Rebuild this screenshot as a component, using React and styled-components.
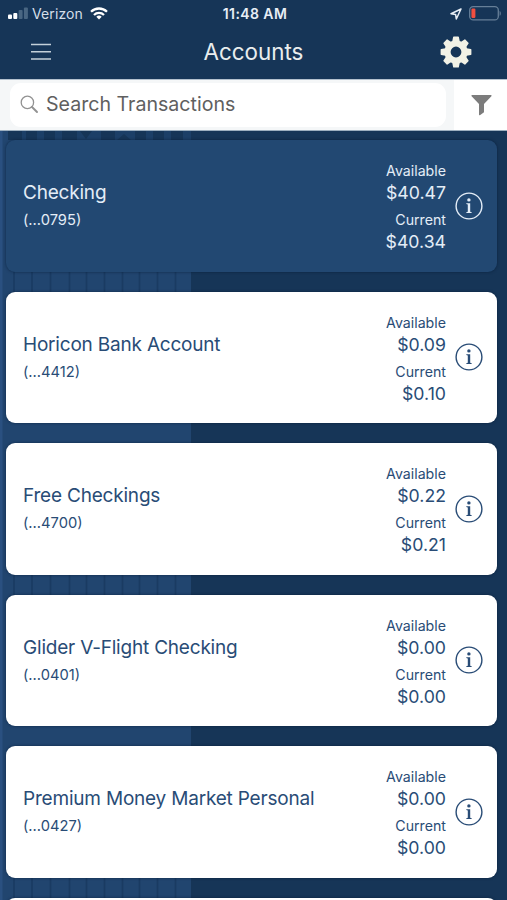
import React from "react";
import styled, { createGlobalStyle, css } from "styled-components";

const accounts = [
  { name: "Checking", number: "0795", available: "$40.47", current: "$40.34", selected: true },
  { name: "Horicon Bank Account", number: "4412", available: "$0.09", current: "$0.10" },
  { name: "Free Checkings", number: "4700", available: "$0.22", current: "$0.21" },
  { name: "Glider V-Flight Checking", number: "0401", available: "$0.00", current: "$0.00" },
  { name: "Premium Money Market Personal", number: "0427", available: "$0.00", current: "$0.00" },
];

const GlobalStyle = createGlobalStyle`
  * {
    box-sizing: border-box;
  }

  body {
    margin: 0;
    background: #163557;
    font-family: Inter, "Liberation Sans", sans-serif;
  }
`;

const Screen = styled.div`
  display: flex;
  flex-direction: column;
  height: 900px;
  overflow: hidden;
  background: #163557;
`;

const StatusBar = styled.div`
  flex: none;
  display: grid;
  grid-template-columns: 1fr auto 1fr;
  align-items: center;
  height: 27px;
  padding: 0 5px 0 8px;
  color: #e8eef5;
  font-size: 14px;
`;

const StatusGroup = styled.div`
  display: flex;
  align-items: center;
  justify-content: ${(props) => (props.$end ? "flex-end" : "flex-start")};

  & svg {
    flex: none;
    display: block;
  }
`;

const Carrier = styled.span`
  margin: 0 7px 0 4px;
  letter-spacing: 0.1px;
  color: #d5dfe9;
`;

const Clock = styled.span`
  font-weight: 600;
  font-size: 14px;
  letter-spacing: 0.4px;
`;

const NavBar = styled.header`
  flex: none;
  display: grid;
  grid-template-columns: 82px 1fr 103px;
  align-items: center;
  height: 52px;
  padding-bottom: 3px;
`;

const Title = styled.h1`
  margin: 0;
  padding: 0 0 1px 21px;
  text-align: center;
  font-size: 22.4px;
  font-weight: 400;
  color: #e9edee;
`;

const IconButton = styled.button`
  display: flex;
  align-items: center;
  justify-content: center;
  padding: 0;
  border: 0;
  background: none;
`;

const SearchBar = styled.div`
  flex: none;
  display: flex;
  height: 52px;
  border-top: 1px solid #b4c1ce;
  border-bottom: 1px solid #9dafbf;
  background: #fff;
`;

const SearchWrap = styled.div`
  width: 454px;
  padding: 3px 8px 3px 10px;
  background: #f5f7f8;
`;

const SearchField = styled.div`
  display: flex;
  align-items: center;
  height: 44px;
  padding: 0 0 2px 10px;
  border-radius: 11px;
  background: #fff;
  color: #606060;
  font-size: 19.6px;

  & span {
    margin-left: 7px;
  }
`;

const FilterButton = styled(IconButton)`
  flex: 1;
  padding-left: 1px;
`;

const List = styled.main`
  flex: 1;
  position: relative;
  overflow: hidden;
`;

const Backdrop = styled.svg`
  position: absolute;
  top: 0;
  left: 0;
`;

const Cards = styled.div`
  position: relative;
  display: flex;
  flex-direction: column;
  gap: 20px;
  padding: 9px 10px 0 6px;
`;

const Card = styled.section`
  flex: none;
  display: flex;
  align-items: center;
  height: 131.5px;
  padding: 0 14px 0 17px;
  border-radius: 9px;
  background: #fff;
  color: #294c76;
  box-shadow: 0 0 3px rgba(5, 25, 50, 0.65);

  ${(props) =>
    props.$selected &&
    css`
      background: #224872;
      color: #e4edf7;
    `}
`;

const AccountInfo = styled.div`
  flex: 1;
  padding-top: 2px;
`;

const AccountName = styled.div`
  line-height: 28px;
  font-size: 19px;
  letter-spacing: -0.2px;
`;

const AccountNumber = styled.div`
  line-height: 27px;
  font-size: 14.7px;
`;

const Balances = styled.div`
  padding-top: 2px;
  margin-right: 9px;
  text-align: right;
`;

const Label = styled.div`
  line-height: 22px;
  font-size: 14.2px;
`;

const Amount = styled.div`
  line-height: 22px;
  font-size: 17.7px;
  margin-bottom: ${(props) => (props.$last ? 0 : "5px")};
`;

function SignalIcon() {
  return (
    <svg width="20" height="13" viewBox="0 0 20 13">
      <rect x="0" y="7.5" width="4" height="4.5" rx="1" fill="#fff" />
      <rect x="5.3" y="6" width="4" height="6" rx="1" fill="#fff" />
      <rect x="10.6" y="3" width="4" height="9" rx="1" fill="#496682" />
      <rect x="15.9" y="0.5" width="4" height="11.5" rx="1" fill="#496682" />
    </svg>
  );
}

function WifiIcon() {
  return (
    <svg width="18" height="13" viewBox="0 0 18 13" fill="none" stroke="#fff" strokeWidth="2.3">
      <path d="M1 4.8a11.4 11.4 0 0 1 16 0" />
      <path d="M4 8a7.1 7.1 0 0 1 10 0" />
      <path d="M9 12.5 6.3 9.8a3.9 3.9 0 0 1 5.4 0z" fill="#fff" stroke="none" />
    </svg>
  );
}

function LocationIcon() {
  return (
    <svg width="12" height="12" viewBox="0 0 12 12" fill="none" stroke="#e8eef5" strokeWidth="1.5" strokeLinejoin="round">
      <path d="M11 1 1 5.7l4.6.7.7 4.6z" />
    </svg>
  );
}

function BatteryIcon() {
  return (
    <svg width="33" height="15" viewBox="0 0 33 15">
      <rect x="0.7" y="0.7" width="28.6" height="13.2" rx="3.5" fill="none" stroke="#667f98" strokeWidth="1.3" />
      <rect x="2.4" y="2.6" width="4" height="9.4" rx="1.2" fill="#f04f40" />
      <path d="M30.6 5v4.8c1.6-.5 1.6-4.3 0-4.8z" fill="#667f98" />
    </svg>
  );
}

function MenuIcon() {
  return (
    <svg width="20" height="18" viewBox="0 0 20 18" stroke="#c3d0d9" strokeWidth="1.5">
      <path d="M0 1.5h20M0 8.7h20M0 15.9h20" />
    </svg>
  );
}

function GearIcon() {
  const teeth = [0, 45, 90, 135, 180, 225, 270, 315];
  return (
    <svg width="32" height="32" viewBox="-16 -16 32 32">
      <circle r="8.5" fill="none" stroke="#f2f2e6" strokeWidth="6.2" />
      {teeth.map((angle) => (
        <path
          key={angle}
          d="M-3.8-10.5-2.9-14.9Q-2.8-15.4-2.2-15.4H2.2Q2.8-15.4 2.9-14.9L3.8-10.5z"
          transform={`rotate(${angle})`}
          fill="#f2f2e6"
        />
      ))}
    </svg>
  );
}

function SearchIcon() {
  return (
    <svg width="19" height="19" viewBox="0 0 19 19" fill="none" stroke="#929292" strokeLinecap="round">
      <circle cx="7.4" cy="7.4" r="6.2" strokeWidth="1.3" />
      <path d="m12 12 5 5" strokeWidth="1.9" />
    </svg>
  );
}

function FilterIcon() {
  return (
    <svg width="21" height="22" viewBox="0 0 21 22">
      <path d="M.8 1h19.4q.6.5.2 1.3L13 10v8.2l-4.1 3q-.9.3-.9-.7V10L.6 2.3Q.2 1.5.8 1z" fill="#7c7c7c" />
    </svg>
  );
}

function InfoIcon() {
  return (
    <svg width="28" height="28" viewBox="0 0 28 28" fill="none">
      <circle cx="14" cy="14" r="12.9" stroke="currentColor" strokeWidth="1.4" />
      <circle cx="13.9" cy="7.9" r="1.7" fill="currentColor" />
      <path d="M11.3 11.3h3.9v8.5l1.5.4v.8h-5.4v-.8l1.5-.4v-7.3l-1.5-.4z" fill="currentColor" />
    </svg>
  );
}

// Bank building behind the cards: brick columns between plain bands
function Building() {
  const joints = [14, 32, 50.5, 69.5, 86.5, 104.5, 122.5, 139.5, 157.5, 175.5];
  const windows = [
    [8, 14],
    [26, 11],
    [44, 11],
    [62, 15],
    [101, 14],
    [135, 11],
    [153, 11],
    [171, 12],
  ];
  return (
    <Backdrop width="507" height="769" viewBox="0 0 507 769">
      <rect width="191" height="769" fill="#21456f" />
      <rect width="2.5" height="769" fill="#2a5080" />
      <rect x="8" width="183" height="9" fill="#1c3f67" />
      {windows.map(([x, width]) => (
        <rect key={x} x={x} y="0" width={width} height="9" fill="#163557" />
      ))}
      <path d="M80 0h12l-6 8zM117 9l7-6 7 6z" fill="#163557" />
      {[141, 444, 747].map((y) =>
        joints.map((x) => <rect key={`${x}-${y}`} x={x - 0.8} y={y} width="1.6" height="20" fill="#1a3b62" />)
      )}
    </Backdrop>
  );
}

function AccountCard({ account }) {
  return (
    <Card $selected={account.selected}>
      <AccountInfo>
        <AccountName>{account.name}</AccountName>
        <AccountNumber>(...{account.number})</AccountNumber>
      </AccountInfo>
      <Balances>
        <Label>Available</Label>
        <Amount>{account.available}</Amount>
        <Label>Current</Label>
        <Amount $last>{account.current}</Amount>
      </Balances>
      <InfoIcon />
    </Card>
  );
}

export default function App() {
  return (
    <Screen>
      <GlobalStyle />
      <StatusBar>
        <StatusGroup>
          <SignalIcon />
          <Carrier>Verizon</Carrier>
          <WifiIcon />
        </StatusGroup>
        <Clock>11:48 AM</Clock>
        <StatusGroup $end>
          <LocationIcon />
          <span style={{ width: 7 }} />
          <BatteryIcon />
        </StatusGroup>
      </StatusBar>
      <NavBar>
        <IconButton aria-label="Menu">
          <MenuIcon />
        </IconButton>
        <Title>Accounts</Title>
        <IconButton aria-label="Settings">
          <GearIcon />
        </IconButton>
      </NavBar>
      <SearchBar>
        <SearchWrap>
          <SearchField>
            <SearchIcon />
            <span>Search Transactions</span>
          </SearchField>
        </SearchWrap>
        <FilterButton aria-label="Filter">
          <FilterIcon />
        </FilterButton>
      </SearchBar>
      <List>
        <Building />
        <Cards>
          {accounts.map((account) => (
            <AccountCard key={account.number} account={account} />
          ))}
          <Card />
        </Cards>
      </List>
    </Screen>
  );
}
